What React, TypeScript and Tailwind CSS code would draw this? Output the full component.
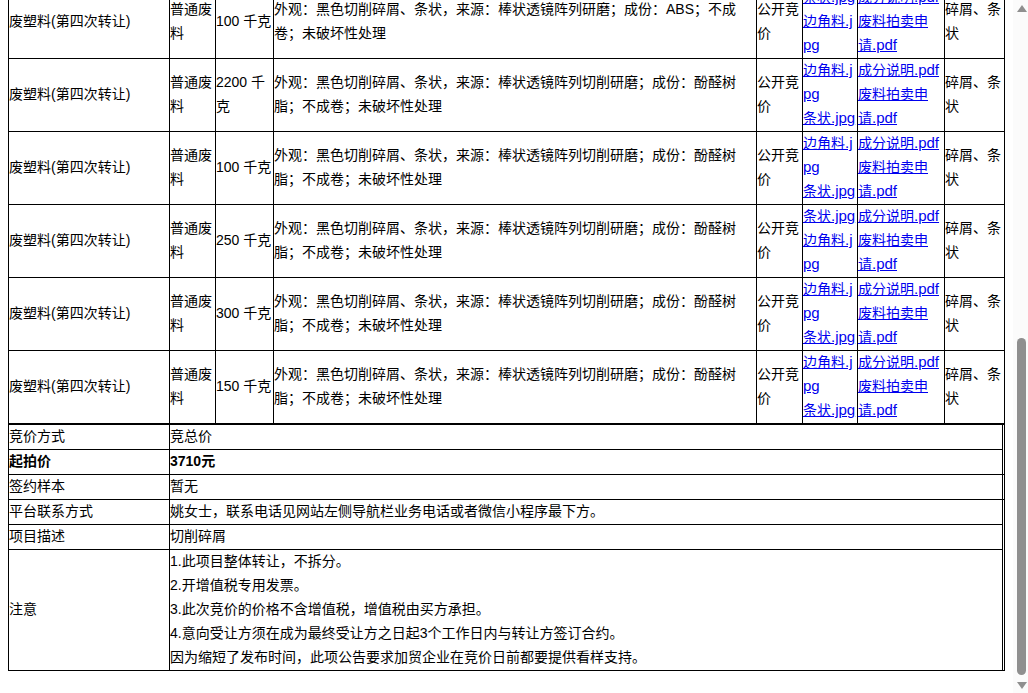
import type { ReactNode } from "react";

const fontStack = "font-['Liberation_Sans','Noto_Sans_CJK_SC',sans-serif]";

const ABS_DESC = "外观：黑色切削碎屑、条状，来源：棒状透镜阵列研磨；成份：ABS；不成卷；未破坏性处理";
const RESIN_DESC = "外观：黑色切削碎屑、条状，来源：棒状透镜阵列切削研磨；成份：酚醛树脂；不成卷；未破坏性处理";

const lots = [
  { weight: "100 千克", desc: ABS_DESC, images: ["条状.jpg", "边角料.jpg"] },
  { weight: "2200 千克", desc: RESIN_DESC, images: ["边角料.jpg", "条状.jpg"] },
  { weight: "100 千克", desc: RESIN_DESC, images: ["边角料.jpg", "条状.jpg"] },
  { weight: "250 千克", desc: RESIN_DESC, images: ["条状.jpg", "边角料.jpg"] },
  { weight: "300 千克", desc: RESIN_DESC, images: ["边角料.jpg", "条状.jpg"] },
  { weight: "150 千克", desc: RESIN_DESC, images: ["边角料.jpg", "条状.jpg"] },
];

const notes = [
  "1.此项目整体转让，不拆分。",
  "2.开增值税专用发票。",
  "3.此次竞价的价格不含增值税，增值税由买方承担。",
  "4.意向受让方须在成为最终受让方之日起3个工作日内与转让方签订合约。",
  "因为缩短了发布时间，此项公告要求加贸企业在竞价日前都要提供看样支持。",
];

const infoRows = [
  { label: "竞价方式", value: "竞总价", closed: false },
  { label: "起拍价", value: "3710元", bold: true, closed: true },
  { label: "签约样本", value: "暂无", closed: true },
  { label: "平台联系方式", value: "姚女士，联系电话见网站左侧导航栏业务电话或者微信小程序最下方。", closed: false },
  { label: "项目描述", value: "切削碎屑", closed: false },
];

// latin part of the file names is a little larger than the chinese part
const FileLink = ({ name }: { name: string }) => {
  const dot = name.lastIndexOf(".");
  return (
    <a href="#" className="block break-all text-[#0000ee] underline">
      {name.slice(0, dot)}
      <span className="text-[15px]">{name.slice(dot)}</span>
    </a>
  );
};

const Cell = ({ children }: { children: ReactNode }) => (
  <td className="border border-black p-0 align-middle">
    <div className="-mt-px pb-px">{children}</div>
  </td>
);

const Scrollbar = () => (
  <div className="flex w-[15px] shrink-0 flex-col items-center bg-[#fbfbfb]">
    <svg width="10" height="7" viewBox="0 0 10 7" className="mt-[5px] ml-[3px]">
      <path d="M5 0 L10 7 L0 7 Z" fill="#8f8f8f" />
    </svg>
    <div className="mt-[326px] ml-[2px] h-[337px] w-[9px] rounded-full bg-[#8f8f8f]" />
    <svg width="10" height="7" viewBox="0 0 10 7" className="mt-[7px] ml-[2px]">
      <path d="M0 0 L10 0 L5 7 Z" fill="#8f8f8f" />
    </svg>
  </div>
);

export default function App() {
  return (
    <div className={`flex h-[693px] w-[1028px] overflow-hidden bg-white text-sm leading-6 text-black ${fontStack}`}>
      <div className="min-w-0 flex-1 pl-2">
        <div className="mt-[-15px] w-[997px]">
          <table className="w-[997px] table-fixed border-collapse">
            <colgroup>
              <col className="w-[161px]" />
              <col className="w-[46px]" />
              <col className="w-[58px]" />
              <col className="w-[483px]" />
              <col className="w-[46px]" />
              <col className="w-[55px]" />
              <col className="w-[87px]" />
              <col className="w-[60px]" />
            </colgroup>
            <tbody>
              {lots.map((lot, i) => (
                <tr key={i}>
                  <Cell>废塑料(第四次转让)</Cell>
                  <Cell>普通废料</Cell>
                  <Cell>{lot.weight}</Cell>
                  <Cell>{lot.desc}</Cell>
                  <Cell>公开竞价</Cell>
                  <Cell>
                    {lot.images.map((img) => (
                      <FileLink key={img} name={img} />
                    ))}
                  </Cell>
                  <Cell>
                    <FileLink name="成分说明.pdf" />
                    <FileLink name="废料拍卖申请.pdf" />
                  </Cell>
                  <Cell>碎屑、条状</Cell>
                </tr>
              ))}
            </tbody>
          </table>
          <table className="w-[997px] table-fixed border-collapse">
            <colgroup>
              <col className="w-[161px]" />
              <col className="w-[833px]" />
              <col className="w-[2px]" />
            </colgroup>
            <tbody>
              {infoRows.map((row) => (
                <tr key={row.label} className={row.bold ? "font-bold" : ""}>
                  <Cell>{row.label}</Cell>
                  <Cell>{row.value}</Cell>
                  <td className={`border-x border-black p-0 ${row.closed ? "border-b" : ""} ${row.label === "竞价方式" ? "border-t" : ""}`} />
                </tr>
              ))}
              <tr>
                <Cell>注意</Cell>
                <Cell>
                  {notes.map((note) => (
                    <div key={note}>{note}</div>
                  ))}
                </Cell>
                <td className="border-x border-b border-black p-0" />
              </tr>
            </tbody>
          </table>
        </div>
      </div>
      <Scrollbar />
    </div>
  );
}
